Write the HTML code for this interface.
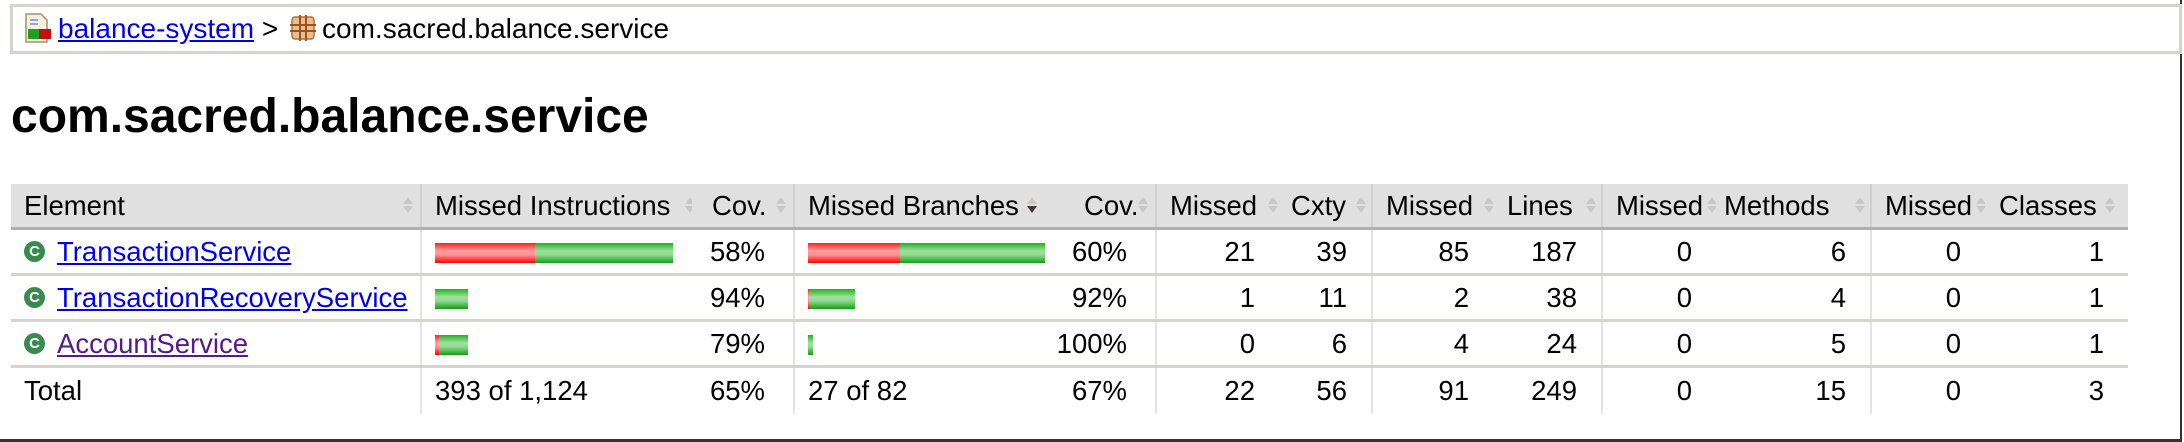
<!DOCTYPE html>
<html><head><meta charset="utf-8"><style>
html,body{margin:0;padding:0;background:#fff;}
body{width:2184px;height:442px;position:relative;overflow:hidden;font-family:"Liberation Sans",Arial,sans-serif;color:#000;}
.frame{position:absolute;left:0;top:0;width:2180px;height:439px;border-right:2px solid #333;border-bottom:3px solid #333;}
.bc{position:absolute;left:10px;top:4px;width:2166px;height:44px;border:3px solid #d6d3ce;font-size:28px;line-height:44px;white-space:nowrap;}
.bc a{color:#0000ee;text-decoration:underline;}
h1{position:absolute;left:11px;top:89px;margin:0;font-size:48px;font-weight:bold;line-height:56px;white-space:nowrap;}
table{position:absolute;left:11px;top:184px;border-collapse:collapse;table-layout:fixed;font-size:27.5px;width:2117px;}
th{background:#e0e0e0;height:43px;font-weight:normal;text-align:left;padding:0 0 0 13px;border-bottom:3px solid #b0b0b0;white-space:nowrap;position:relative;}
th.g{border-left:2px solid #d0d0d0;}
td{height:43px;border-bottom:3px solid #d6d3ce;padding:0;white-space:nowrap;}
tr.tot td{border-bottom:none;height:46px;}
td.g{border-left:2px solid #e4e4e4;}
.r{text-align:right;padding-right:24px;}
.c{text-align:right;padding-right:28px;}
.l{padding-left:13px;}
.s{position:absolute;right:6px;top:12px;width:12px;height:18px;}
a.lk{color:#0000ee;}
a.v{color:#551a8b;}
.bar{display:inline-block;height:20px;vertical-align:middle;}
.red{background:linear-gradient(#ff2020,#ffa0a0 40%,#ff9090 60%,#ff0000);}
.grn{background:linear-gradient(#20b020,#a0e0a0 40%,#90d890 60%,#10a010);}
.ic{display:inline-block;width:21px;height:21px;border-radius:50%;background:#3a8a50;color:#fff;font-weight:bold;font-size:15px;line-height:21px;text-align:center;vertical-align:middle;margin:0 12px 0 0;position:relative;top:-2px;}
</style></head><body>
<div class="frame"></div>
<div class="bc">
<svg width="30" height="30" viewBox="0 0 30 30" style="vertical-align:middle;margin:0 5px 0 10px;position:relative;top:-3px"><path d="M3 1h15l6 6v22H3z" fill="#f4f0e0" stroke="#a89060" stroke-width="1.5"/><line x1="7" y1="7" x2="15" y2="7" stroke="#8090c0" stroke-width="1.5"/><line x1="7" y1="11" x2="15" y2="11" stroke="#8090c0" stroke-width="1.5"/><rect x="5" y="16" width="11" height="10" fill="#20a020"/><rect x="16" y="16" width="12" height="10" fill="#c01010"/></svg><a href="#">balance-system</a> &gt; <svg width="26" height="28" viewBox="0 0 26 28" style="vertical-align:middle;margin:0 6px 0 4px;position:relative;top:-3px"><rect x="2" y="3" width="22" height="22" rx="3" fill="#e8c090" stroke="#b07040" stroke-width="1.5"/><line x1="10" y1="1" x2="10" y2="27" stroke="#a05020" stroke-width="2"/><line x1="16" y1="1" x2="16" y2="27" stroke="#a05020" stroke-width="2"/><line x1="0" y1="11" x2="26" y2="11" stroke="#a05020" stroke-width="2"/><line x1="0" y1="17" x2="26" y2="17" stroke="#a05020" stroke-width="2"/></svg>com.sacred.balance.service</div>
<h1>com.sacred.balance.service</h1>
<svg width="0" height="0" style="position:absolute"><defs><symbol id="so" viewBox="0 0 12 18"><path d="M6 1L11 8H1z" fill="#c8c8c8"/><path d="M6 17L11 10H1z" fill="#c8c8c8"/></symbol><symbol id="sd" viewBox="0 0 12 18"><path d="M6 1L11 8H1z" fill="#c8c8c8"/><path d="M6 17L11 10H1z" fill="#4a3a30"/></symbol></defs></svg>
<table>
<colgroup><col style="width:410px"><col style="width:271px"><col style="width:102px"><col style="width:260px"><col style="width:102px"><col style="width:123px"><col style="width:93px"><col style="width:121px"><col style="width:109px"><col style="width:114px"><col style="width:155px"><col style="width:114px"><col style="width:143px"></colgroup>
<tr><th>Element<svg class="s"><use href="#so"/></svg></th><th class="g">Missed Instructions<svg class="s" style="right:-4px"><use href="#so"/></svg></th><th style="padding-left:20px">Cov.<svg class="s"><use href="#so"/></svg></th><th class="g">Missed Branches<svg class="s" style="right:16px"><use href="#sd"/></svg></th><th style="padding-left:30px">Cov.<svg class="s"><use href="#so"/></svg></th><th class="g">Missed<svg class="s" style="right:0"><use href="#so"/></svg></th><th style="padding-left:12px">Cxty<svg class="s" style="right:4px"><use href="#so"/></svg></th><th class="g">Missed<svg class="s" style="right:-2px"><use href="#so"/></svg></th><th style="padding-left:14px">Lines<svg class="s" style="right:4px"><use href="#so"/></svg></th><th class="g">Missed<svg class="s" style="right:-2px"><use href="#so"/></svg></th><th style="padding-left:8px">Methods<svg class="s" style="right:4px"><use href="#so"/></svg></th><th class="g">Missed<svg class="s" style="right:-2px"><use href="#so"/></svg></th><th style="padding-left:14px">Classes<svg class="s" style="right:12px"><use href="#so"/></svg></th></tr>
<tr><td class="l"><span class="ic">C</span><a class="lk" href="#">TransactionService</a></td><td class="g l"><span class="bar red" style="width:100px"></span><span class="bar grn" style="width:138px"></span></td><td class="c">58%</td><td class="g l"><span class="bar red" style="width:92px"></span><span class="bar grn" style="width:145px"></span></td><td class="c">60%</td><td class="g r">21</td><td class="r">39</td><td class="g r">85</td><td class="r">187</td><td class="g r">0</td><td class="r">6</td><td class="g r">0</td><td class="r">1</td></tr>
<tr><td class="l"><span class="ic">C</span><a class="lk" href="#">TransactionRecoveryService</a></td><td class="g l"><span class="bar grn" style="width:33px"></span></td><td class="c">94%</td><td class="g l"><span class="bar red" style="width:1px"></span><span class="bar grn" style="width:46px"></span></td><td class="c">92%</td><td class="g r">1</td><td class="r">11</td><td class="g r">2</td><td class="r">38</td><td class="g r">0</td><td class="r">4</td><td class="g r">0</td><td class="r">1</td></tr>
<tr><td class="l"><span class="ic">C</span><a class="v" href="#">AccountService</a></td><td class="g l"><span class="bar red" style="width:4px"></span><span class="bar grn" style="width:29px"></span></td><td class="c">79%</td><td class="g l"><span class="bar grn" style="width:5px"></span></td><td class="c">100%</td><td class="g r">0</td><td class="r">6</td><td class="g r">4</td><td class="r">24</td><td class="g r">0</td><td class="r">5</td><td class="g r">0</td><td class="r">1</td></tr>
<tr class="tot"><td class="l">Total</td><td class="g l">393 of 1,124</td><td class="c">65%</td><td class="g l">27 of 82</td><td class="c">67%</td><td class="g r">22</td><td class="r">56</td><td class="g r">91</td><td class="r">249</td><td class="g r">0</td><td class="r">15</td><td class="g r">0</td><td class="r">3</td></tr>
</table>
</body></html>
